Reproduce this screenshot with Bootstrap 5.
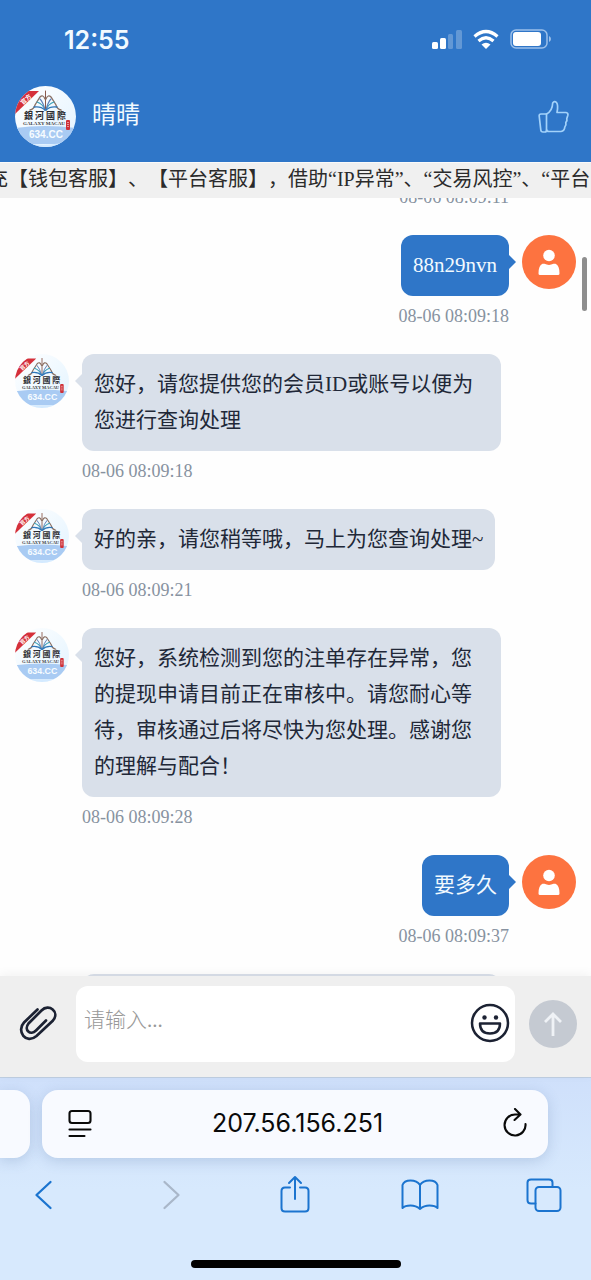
<!DOCTYPE html>
<html lang="zh-CN">
<head>
<meta charset="utf-8">
<meta name="viewport" content="width=device-width, initial-scale=1">
<title>晴晴</title>
<link href="https://cdn.jsdelivr.net/npm/bootstrap@5.3.0/dist/css/bootstrap.min.css" rel="stylesheet">
<style>
  :root { --brand: #2f76c8; --bubble: #d9e0ea; --ink: #212838; --link: #1b74cf; }
  body {
    height: 100vh;
    font-family: "Liberation Serif", "Noto Sans CJK SC", serif;
    font-size: 21px;
    color: var(--ink);
    text-spacing-trim: space-all;
  }
  svg { display: block; flex: none; }
  button { flex: none; }
  .ui-font { font-family: Inter, "Liberation Sans", sans-serif; }

  .top-area { background: var(--brand); color: #f2faff; }
  .status-row { height: 70px; padding: 10px 40px 0 64px; }
  .clock { font-size: 25px; line-height: 30px; font-weight: 600; }
  .agent-row { height: 92px; padding: 0 20px 0 15px; gap: 16px; }
  .agent-name { font-size: 24px; line-height: 32px; font-weight: 400; padding-bottom: 2px; }

  .notice { height: 36px; background: #f0f0f0; border-top: 1px solid #fafafa; font-size: 20px; line-height: 32px; color: #2b2b2b; }
  .notice p { margin: 0 0 0 -12px; }

  .chat { min-height: 0; background: #fefefe; }
  .stream { margin-top: -21px; }
  .msg { display: flex; align-items: flex-start; gap: 13px; padding: 0 90px 18px 15px; }
  .msg.mine { flex-direction: row-reverse; padding: 0 15px 18px 90px; }
  .msg-main { display: flex; flex-direction: column; align-items: flex-start; }
  .mine .msg-main { align-items: flex-end; }
  .bubble { position: relative; margin: 0; padding: 12px 12px 13px; border-radius: 12px; background: var(--bubble); line-height: 36px; }
  .mine .bubble { background: var(--brand); color: #f2faff; }
  .bubble::before { content: ""; position: absolute; top: 20px; right: 100%; border: 7px solid transparent; border-right-color: var(--bubble); border-left-width: 0; }
  .mine .bubble::before { right: auto; left: 100%; border: 7px solid transparent; border-left-color: var(--brand); border-right-width: 0; }
  .msg time { font-size: 18px; line-height: 40px; color: #8792a0; }
  .msg.first { padding-right: 82px; }
  .next-bubble { margin: 0 90px 0 82px; height: 60px; border-radius: 12px; background: var(--bubble); }
  .thumb { position: absolute; right: 4px; top: 59px; width: 5px; height: 54px; border-radius: 3px; background: #8e8e8e; }

  .composer { position: relative; background: #efefef; padding: 10px 14px 15px 18px; gap: 14px; box-shadow: 0 -2px 10px rgba(0,0,0,.05); }
  .entry { height: 76px; border-radius: 12px; background: #fff; padding-right: 4px; margin-left: 4px; }
  .entry input { border: 0; outline: 0; background: none; min-width: 0; height: 76px; padding: 0 8px 8px; color: var(--ink); }
  .entry input::placeholder { color: #999; opacity: 1; font-weight: 300; }
  .send { width: 48px; height: 48px; background: #c5cad2; }

  .browser { background: linear-gradient(#cfe0fb, #d7e9fd 55%); border-top: 1px solid #bfcfe2; padding-top: 12px; }
  .tab-row { gap: 12px; padding-right: 43px; }
  .prev-tab, .url-bar { height: 68px; background: #f8faff; box-shadow: 0 3px 14px rgba(70,100,150,.22); }
  .prev-tab { width: 30px; border-radius: 0 16px 16px 0; flex: none; }
  .url-bar { border-radius: 16px; padding: 0 19px 0 24px; color: #0a0a0a; }
  .url-bar a { font-size: 25px; color: #0a0a0a; }
  .tools { padding: 16px 26px 0 24px; color: var(--link); }
  .tools .btn { color: inherit; }
  .tools .btn:disabled { color: #a9b7c9; opacity: 1; border: 0; }
  .home-bar { width: 210px; height: 8px; border-radius: 4px; background: #000; margin: 44px auto 12px; }
</style>
</head>
<body class="d-flex flex-column overflow-hidden">

<svg width="0" height="0" class="position-absolute" aria-hidden="true">
  <defs>
    <clipPath id="disc"><circle cx="30.500" cy="30.500" r="30.500"/></clipPath>
    <linearGradient id="pale" x1="0" y1="0" x2="1" y2="1"><stop offset="0" stop-color="#fff"/><stop offset="1" stop-color="#e2f3ff"/></linearGradient>
  </defs>
  <symbol id="logo" viewBox="0 0 61 61">
    <g clip-path="url(#disc)">
      <rect width="61" height="61" fill="url(#pale)"/>
      <path d="M0 42Q30 38 61 42V58H0Z" fill="#a9cbf3"/>
      <path d="M5 56Q30 62 56 55V61H5Z" fill="#d4eaff"/>
      <path d="M-1 29 24 5H13L-2 14Z" fill="#d5303a"/>
    </g>
    <g fill="none" stroke-linecap="round">
      <path d="M30.500 5V23" stroke="#8a5a4c" stroke-width="1"/>
      <path d="M15 24Q19 23 20 19L25 11Q28 8 30 13M46 24Q42 23 41 19L36 11Q33 8 31 13" stroke="#8b7164" stroke-width="1.300"/>
      <path d="M30 24Q28 18 22 16M31 24Q33 18 39 16" stroke="#3aa0b8" stroke-width="1.200"/>
      <path d="M30 24Q28 16 25 13M31 24Q33 16 36 13" stroke="#5b7fb8" stroke-width="1.100"/>
      <path d="M30 24Q26 20 19 21M31 24Q35 20 42 21" stroke="#2f76b8" stroke-width="1.300"/>
    </g>
    <text transform="translate(8 19) rotate(-43)" font-family="Noto Sans CJK SC" font-weight="700" font-size="6" fill="#fff">官方</text>
    <text x="9 20 31 42" y="33" font-family="Noto Sans CJK TC" font-weight="700" font-size="9" fill="#2b2b30">銀河國際</text>
    <text x="8" y="39" font-family="Liberation Serif" font-weight="700" font-size="5" fill="#3a3a3e">GALAXY MACAU</text>
    <rect x="51" y="34" width="4" height="10" rx="1" fill="#cf3138"/>
    <path d="M53 36V42" stroke="#fff" stroke-width="1" stroke-dasharray="1 1"/>
    <text x="14" y="52" font-family="Liberation Sans" font-weight="700" font-size="10" fill="#f7fcff">634.CC</text>
  </symbol>
  <symbol id="guest" viewBox="0 0 54 54">
    <circle cx="27" cy="27" r="27" fill="#fd7340"/>
    <circle cx="27" cy="20.500" r="5.800" fill="#fff"/>
    <path d="M20.500 28.800H22.500Q27 31 31.500 28.800H33.500Q37.500 30.500 37.500 38.500Q37.500 40 36 40H18Q16.500 40 16.500 38.500Q16.500 30.500 20.500 28.800Z" fill="#fff"/>
  </symbol>
</svg>

<header class="top-area flex-shrink-0">
  <div class="status-row d-flex align-items-center justify-content-between">
    <span class="clock ui-font">12:55</span>
    <svg width="119" height="22" viewBox="0 0 119 22" role="img" aria-label="信号、无线网络、电池">
      <g fill="#fff">
        <rect x="0" y="13" width="6" height="7" rx="1.500"/><rect x="8" y="9" width="6" height="11" rx="1.500"/>
        <g opacity=".25"><rect x="16" y="5" width="5" height="15" rx="1.500"/><rect x="24" y="1" width="6" height="19" rx="1.500"/></g>
        <path d="M54 20 49.500 15.500Q54 12 58.500 15.500Z"/>
      </g>
      <g fill="none" stroke="#fff" stroke-width="3.200"><path d="M42.500 7.500Q54 -2.500 65.500 7.500"/><path d="M46.500 12Q54 5.500 61.500 12"/></g>
      <rect x="79" y="1" width="36" height="18" rx="5" fill="none" stroke="#9cc0ea" stroke-width="1.500"/>
      <rect x="81" y="3" width="28" height="14" rx="3" fill="#fff"/>
      <path d="M117 7Q119 8 119 10T117 13Z" fill="#9cc0ea"/>
    </svg>
  </div>
  <div class="agent-row d-flex align-items-center">
    <svg width="61" height="61" role="img" aria-label="客服头像"><use href="#logo"/></svg>
    <h1 class="agent-name mb-0 flex-grow-1">晴晴</h1>
    <button class="btn p-0 border-0" type="button" aria-label="点赞">
      <svg width="34" height="34" viewBox="0 0 34 34" fill="none" stroke="#a3d2fa" stroke-width="1.700" stroke-linejoin="round" stroke-linecap="round">
        <path d="M9.500 15C13.500 13 15.500 9.500 15.700 4Q17.500 1.500 19.500 3.500Q21.500 6 20 13.500H29Q31.500 14 30.800 16.500L29.800 19.500Q30.500 21.500 28.800 23.500Q29.500 26 27.800 28Q27.500 32 24 32.500H12Q9.500 32.500 9.500 30Z"/>
        <path d="M9.500 15H4Q2 15 2.200 17L3.800 31Q4 33 6 33H8Q9.500 33 9.500 31"/>
      </svg>
    </button>
  </div>
</header>

<div class="notice flex-shrink-0 overflow-hidden text-nowrap"><p>充【钱包客服】、【平台客服】，借助“IP异常”、“交易风控”、“平台限</p></div>

<main class="chat flex-grow-1 position-relative overflow-hidden">
  <div class="stream">
    <div class="msg mine first"><div class="msg-main"><time>08-06 08:09:11</time></div></div>
    <div class="msg mine">
      <svg width="54" height="54" aria-hidden="true"><use href="#guest"/></svg>
      <div class="msg-main"><p class="bubble">88n29nvn</p><time>08-06 08:09:18</time></div>
    </div>
    <div class="msg">
      <svg width="54" height="54" aria-hidden="true"><use href="#logo"/></svg>
      <div class="msg-main"><p class="bubble">您好，请您提供您的会员ID或账号以便为您进行查询处理</p><time>08-06 08:09:18</time></div>
    </div>
    <div class="msg">
      <svg width="54" height="54" aria-hidden="true"><use href="#logo"/></svg>
      <div class="msg-main"><p class="bubble">好的亲，请您稍等哦，马上为您查询处理~</p><time>08-06 08:09:21</time></div>
    </div>
    <div class="msg">
      <svg width="54" height="54" aria-hidden="true"><use href="#logo"/></svg>
      <div class="msg-main"><p class="bubble">您好，系统检测到您的注单存在异常，您的提现申请目前正在审核中。请您耐心等待，审核通过后将尽快为您处理。感谢您的理解与配合！</p><time>08-06 08:09:28</time></div>
    </div>
    <div class="msg mine">
      <svg width="54" height="54" aria-hidden="true"><use href="#guest"/></svg>
      <div class="msg-main"><p class="bubble">要多久</p><time>08-06 08:09:37</time></div>
    </div>
    <div class="next-bubble"></div>
  </div>
  <div class="thumb"></div>
</main>

<form class="composer d-flex align-items-center flex-shrink-0">
  <button class="btn p-0 border-0" type="button" aria-label="附件">
    <svg width="40" height="40" viewBox="0 0 40 40" fill="none" stroke="#1c2233" stroke-width="2.700" stroke-linecap="round">
      <path d="M19.500 5.500 6 18.500C-2 27 8 41 18.500 32L35 16.500C42 8 31 -1 23.500 6.500L10.500 19.500C5.500 26 12.500 32 18 26.500L28 16.500"/>
    </svg>
  </button>
  <div class="entry d-flex align-items-center flex-grow-1">
    <input class="flex-grow-1" type="text" placeholder="请输入..." aria-label="请输入">
    <button class="btn p-0 border-0" type="button" aria-label="表情">
      <svg width="42" height="42" viewBox="0 0 42 42" fill="none" stroke="#1c2233" stroke-width="2.500" stroke-linejoin="round">
        <circle cx="21" cy="20" r="18"/>
        <path d="M11 20.500H31Q31 30.500 21 30.500T11 20.500Z"/>
        <g fill="#1c2233" stroke="none"><circle cx="15.500" cy="14.500" r="2.200"/><circle cx="27" cy="14.500" r="2.200"/></g>
      </svg>
    </button>
  </div>
  <button class="btn send p-0 border-0 rounded-circle d-flex align-items-center justify-content-center" type="submit" aria-label="发送">
    <svg width="24" height="26" viewBox="0 0 24 26" fill="none" stroke="#eff2f6" stroke-width="2.800"><path d="M12 25V3M4 11 12 3 20 11"/></svg>
  </button>
</form>

<footer class="browser ui-font flex-shrink-0">
  <div class="tab-row d-flex">
    <div class="prev-tab"></div>
    <div class="url-bar d-flex align-items-center justify-content-between flex-grow-1">
      <button class="btn p-0 border-0" type="button" aria-label="页面菜单">
        <svg width="28" height="30" viewBox="0 0 28 30" fill="none" stroke="#0a0a0a" stroke-width="2.100" stroke-linecap="round"><rect x="3.500" y="2" width="21" height="12" rx="2.500"/><path d="M3.500 20.500H24.500M3.500 27H18.500"/></svg>
      </button>
      <a class="text-decoration-none" href="#">207.56.156.251</a>
      <button class="btn p-0 border-0" type="button" aria-label="重新载入">
        <svg width="28" height="32" viewBox="0 0 28 32" fill="none" stroke="#0a0a0a" stroke-width="2.100" stroke-linecap="round" stroke-linejoin="round"><path d="M24.500 16A10.500 10.500 0 1 1 14 6.500H19M14 1 19.500 6.500 13.500 12"/></svg>
      </button>
    </div>
  </div>
  <nav class="tools d-flex justify-content-between" aria-label="浏览器">
    <button class="btn p-0 border-0" type="button" aria-label="后退"><svg width="40" height="42" viewBox="0 0 40 42" fill="none" stroke="currentColor" stroke-width="2.300" stroke-linecap="round" stroke-linejoin="round"><path d="M26.500 8 12.500 21 26.500 34"/></svg></button>
    <button class="btn p-0 border-0" type="button" aria-label="前进" disabled><svg width="40" height="42" viewBox="0 0 40 42" fill="none" stroke="currentColor" stroke-width="2.300" stroke-linecap="round" stroke-linejoin="round"><path d="M15.500 8 29.500 21 15.500 34"/></svg></button>
    <button class="btn p-0 border-0" type="button" aria-label="分享"><svg width="40" height="42" viewBox="0 0 40 42" fill="none" stroke="currentColor" stroke-width="2" stroke-linecap="round" stroke-linejoin="round"><path d="M15 13.500H10Q6.500 13.500 6.500 17V34Q6.500 37.500 10 37.500H30Q33.500 37.500 33.500 34V17Q33.500 13.500 30 13.500H25M20 25V3.500M14 9 20 3 26 9"/></svg></button>
    <button class="btn p-0 border-0" type="button" aria-label="书签"><svg width="40" height="42" viewBox="0 0 40 42" fill="none" stroke="currentColor" stroke-width="2" stroke-linecap="round" stroke-linejoin="round"><path d="M20 11Q17 6.500 10.500 6.500T2.500 11V34Q5 31.500 10.500 31.500T20 35Q24 31.500 29.500 31.500T37.500 34V11Q36 6.500 29.500 6.500T20 11V35"/></svg></button>
    <button class="btn p-0 border-0" type="button" aria-label="标签页"><svg width="40" height="42" viewBox="0 0 40 42" fill="none" stroke="currentColor" stroke-width="2" stroke-linecap="round" stroke-linejoin="round"><path d="M10.500 29.500H6Q2.500 29.500 2.500 26V8.500Q2.500 5.500 6 5.500H24Q27.500 5.500 27.500 8.500V13"/><rect x="10.500" y="13" width="25" height="24" rx="3.500"/></svg></button>
  </nav>
  <div class="home-bar"></div>
</footer>

<script src="https://cdn.jsdelivr.net/npm/bootstrap@5.3.0/dist/js/bootstrap.bundle.min.js"></script>
</body>
</html>
